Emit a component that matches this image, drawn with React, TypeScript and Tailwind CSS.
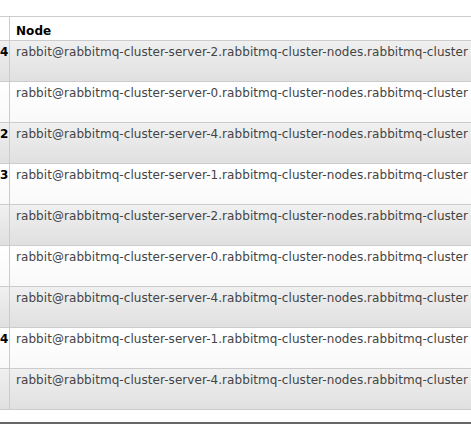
const rows = [
  { n: "4", server: 2, alt: true },
  { n: "", server: 0, alt: false },
  { n: "2", server: 4, alt: true },
  { n: "3", server: 1, alt: false },
  { n: "", server: 2, alt: true },
  { n: "", server: 0, alt: false },
  { n: "", server: 4, alt: true },
  { n: "4", server: 1, alt: false },
  { n: "", server: 4, alt: true },
];

const App = () => {
  return (
    <div className="w-[471px] h-[426px] overflow-hidden bg-white text-[12px] leading-[14px] tracking-[0.06px] text-[#444] font-['DejaVu_Sans',Verdana,sans-serif]">
      <div className="mt-[16px] border-b border-[#ccc]">
        {/* header */}
        <div className="flex h-[24px] border-t border-[#ccc]">
          <div className="w-[9px] shrink-0" />
          <div className="flex-1 whitespace-nowrap border-l border-[#ccc] pl-[6px] pt-[7px] font-bold text-black">
            Node
          </div>
        </div>
        {rows.map((r, i) => (
          <div
            key={i}
            className={`flex h-[41px] border-t border-[#ccc] bg-linear-to-b ${
              r.alt ? "from-[#f0f0f0] to-[#e0e0e0]" : "from-white to-[#f9f9f9]"
            }`}
          >
            <div className="w-[9px] shrink-0 pt-[4px] pr-[1px] text-right font-bold text-black">{r.n}</div>
            <div className="flex-1 whitespace-nowrap border-l border-[#ccc] pl-[6px] pt-[4px]">
              rabbit@rabbitmq-cluster-server-{r.server}.rabbitmq-cluster-nodes.rabbitmq-cluster
            </div>
          </div>
        ))}
      </div>
      <div className="mt-[12px] h-[2px] bg-[#666]" />
    </div>
  );
};

export default App;
